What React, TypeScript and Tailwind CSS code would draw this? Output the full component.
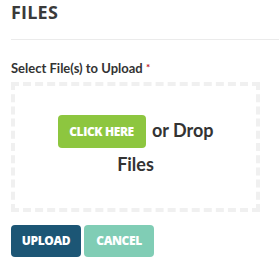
export default function App() {
  return (
    <div className="w-[279px] h-[273px] bg-white pl-[11px] overflow-hidden" style={{ fontFamily: "Lato, 'Open Sans', sans-serif" }}>
      <h2
        className="h-[39px] text-[18px] leading-[24px] font-bold text-[#3a3a3a] tracking-[0.2px]"
        style={{ fontFamily: "'Open Sans', sans-serif" }}
      >
        FILES
      </h2>
      <div className="h-px bg-[#ebebeb]" />
      <div className="mt-[20px] h-[22px] text-[13px] leading-[16px] font-bold text-[#333333]">
        Select File(s) to Upload{" "}
        <span className="text-[10px] align-top leading-[14px] text-[#c0141f]">*</span>
      </div>
      <div className="w-[249px] h-[130px] border-4 border-dashed border-[#f0f0f0] flex items-center justify-center">
        <div className="w-[180px] text-center text-[18px] leading-[32px] font-bold text-[#333333]">
          <span
            className="inline-flex items-center justify-center align-middle w-[88px] h-[33px] mr-[2px] rounded-[4px] bg-[#8dc63f] text-white text-[12px] font-extrabold tracking-[-0.4px]"
            style={{ fontFamily: "'Open Sans', sans-serif" }}
          >
            CLICK HERE
          </span>{" "}
          or Drop Files
        </div>
      </div>
      <div className="mt-[13px] flex gap-[3px]" style={{ fontFamily: "'Open Sans', sans-serif" }}>
        <button className="w-[70px] h-[32px] rounded-[4px] bg-[#1c5675] text-white text-[12px] font-extrabold tracking-[-0.4px]">
          UPLOAD
        </button>
        <button className="w-[70px] h-[32px] rounded-[4px] bg-[#80cdb5] text-white text-[12px] font-extrabold tracking-[-0.4px]">
          CANCEL
        </button>
      </div>
    </div>
  );
}
